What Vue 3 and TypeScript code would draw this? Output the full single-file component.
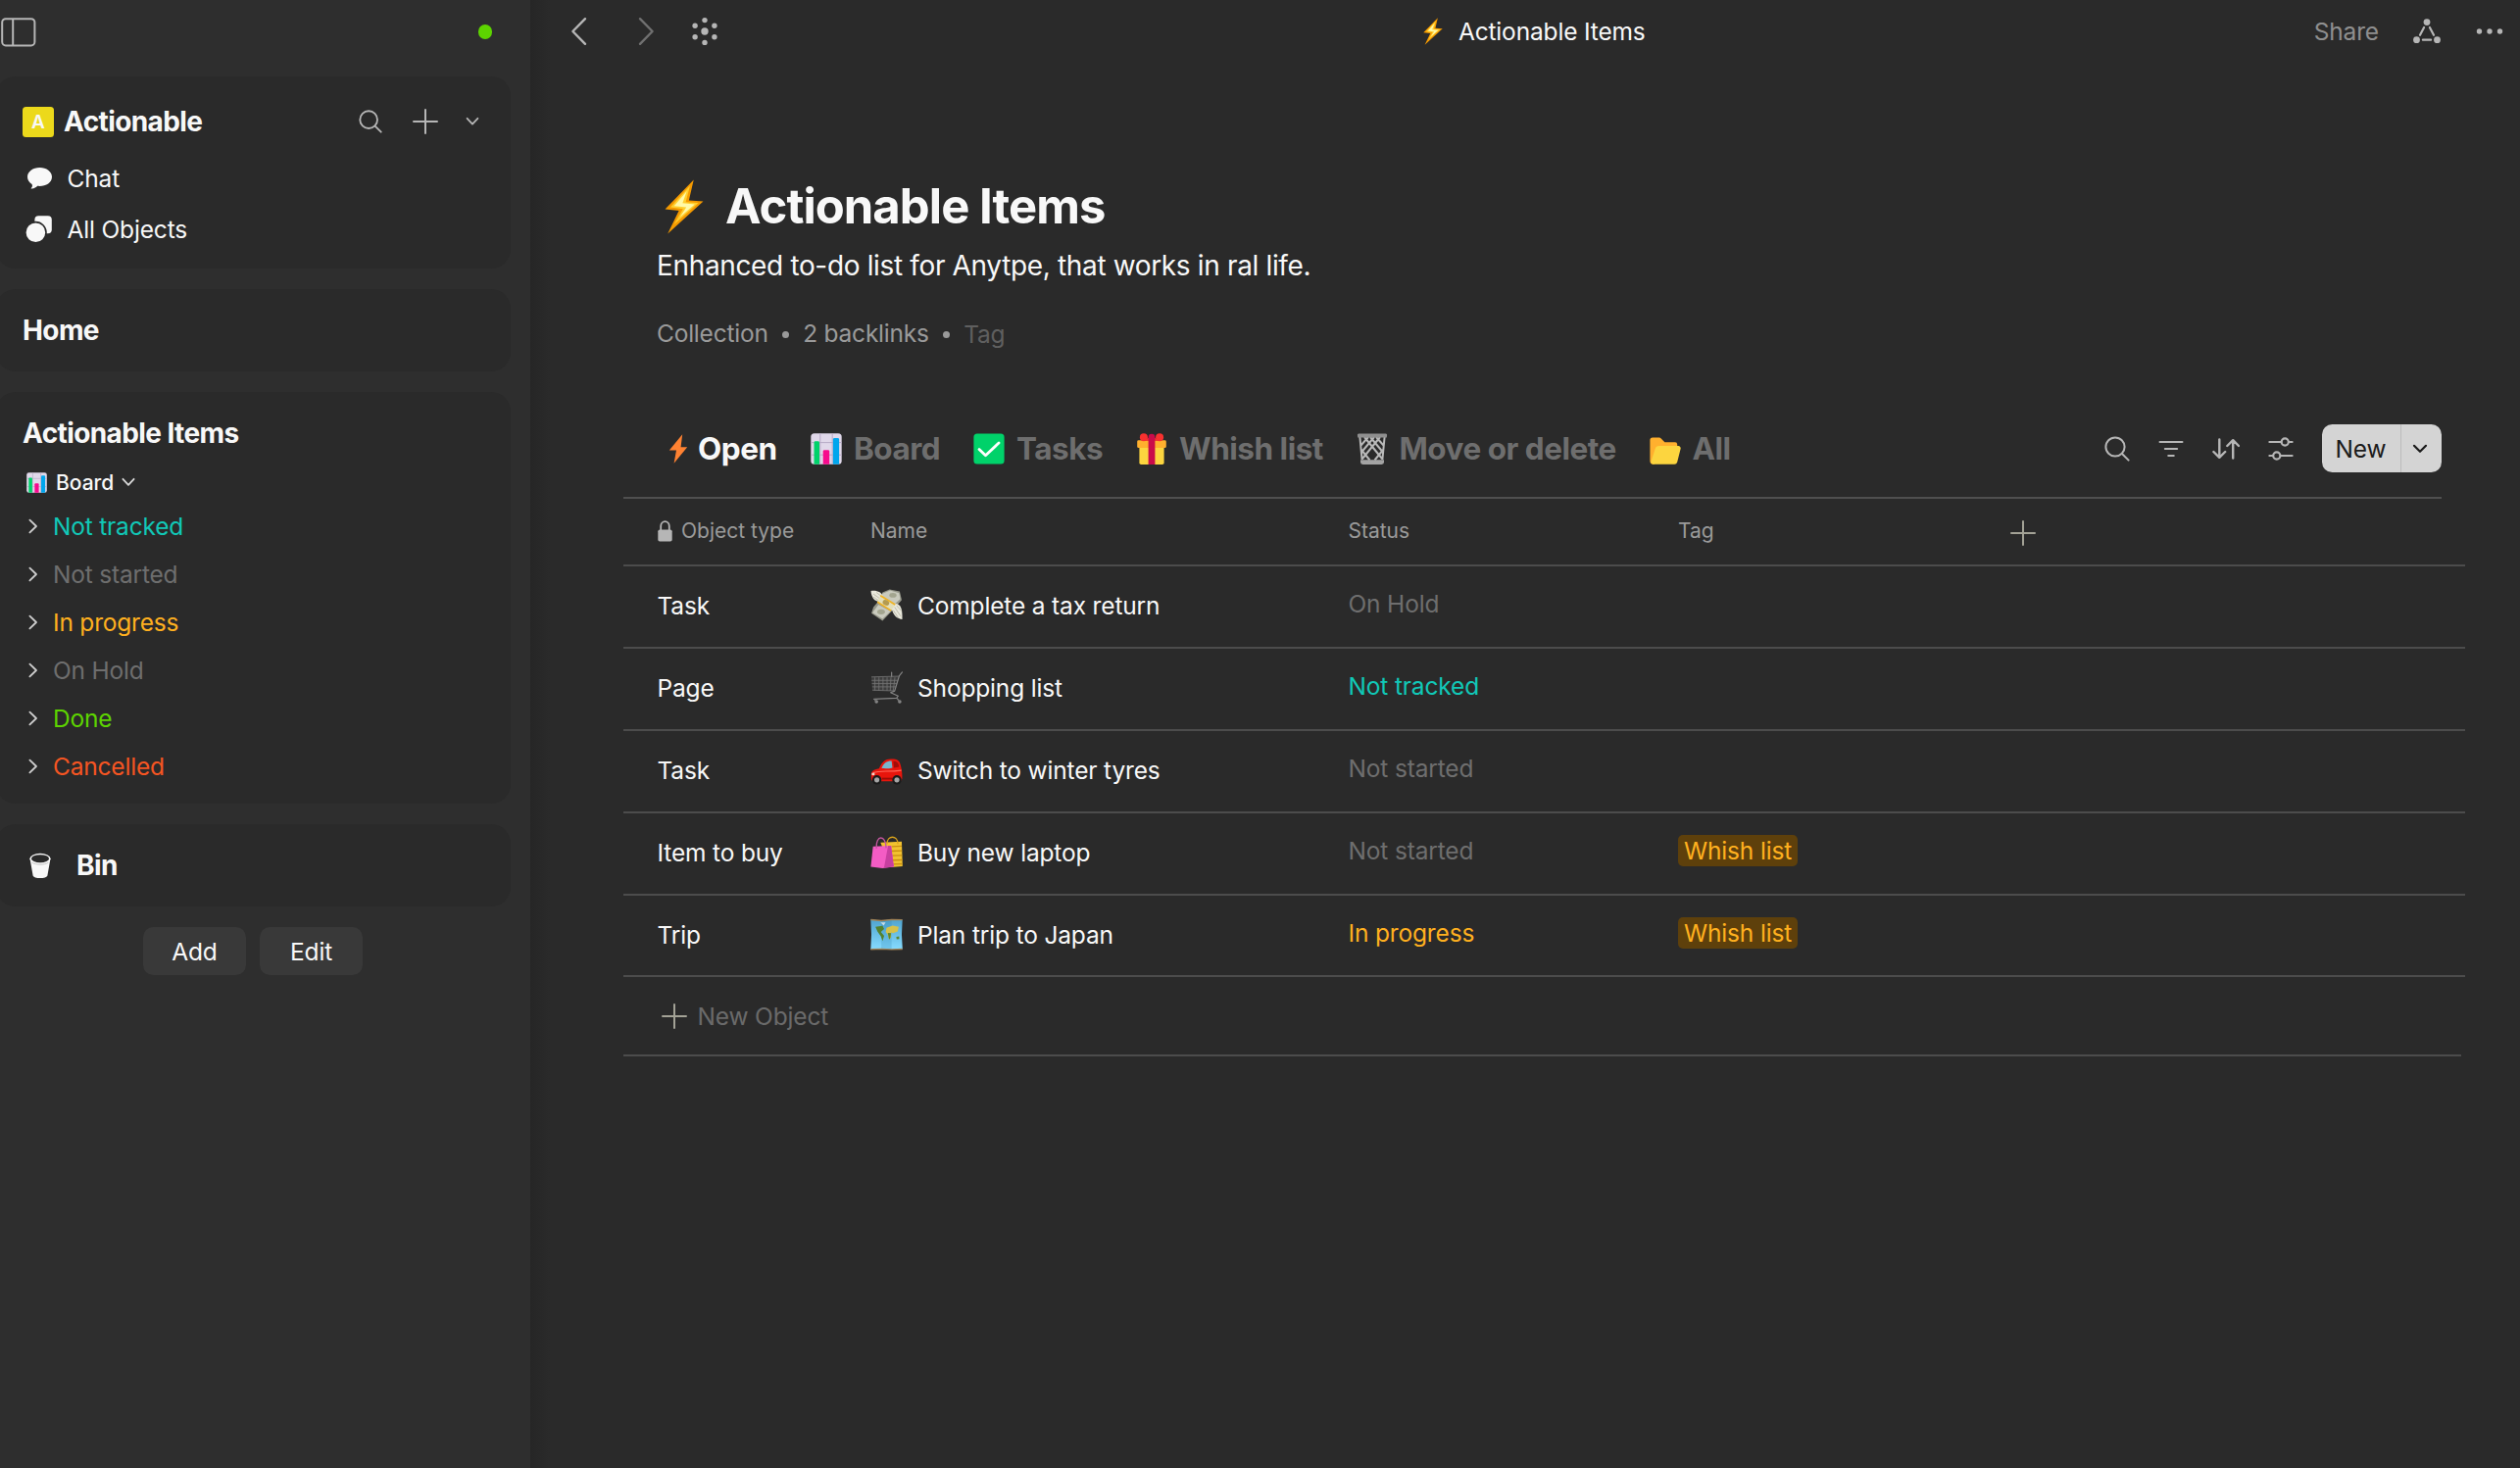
<script setup lang="ts">
interface StatusGroup {
  label: string
  tone: string
}

interface ViewTab {
  label: string
  icon: string
  active?: boolean
}

interface Item {
  type: string
  icon: string
  name: string
  status: string
  tone: string
  tag?: string
}

const groups: StatusGroup[] = [
  { label: 'Not tracked', tone: 'teal' },
  { label: 'Not started', tone: 'grey' },
  { label: 'In progress', tone: 'orange' },
  { label: 'On Hold', tone: 'grey' },
  { label: 'Done', tone: 'lime' },
  { label: 'Cancelled', tone: 'red' },
]

const tabs: ViewTab[] = [
  { label: 'Open', icon: 'flash', active: true },
  { label: 'Board', icon: 'chart' },
  { label: 'Tasks', icon: 'check' },
  { label: 'Whish list', icon: 'gift' },
  { label: 'Move or delete', icon: 'basket' },
  { label: 'All', icon: 'folder' },
]

const items: Item[] = [
  { type: 'Task', icon: 'money', name: 'Complete a tax return', status: 'On Hold', tone: 'grey' },
  { type: 'Page', icon: 'cart', name: 'Shopping list', status: 'Not tracked', tone: 'teal' },
  { type: 'Task', icon: 'car', name: 'Switch to winter tyres', status: 'Not started', tone: 'grey' },
  { type: 'Item to buy', icon: 'bags', name: 'Buy new laptop', status: 'Not started', tone: 'grey', tag: 'Whish list' },
  { type: 'Trip', icon: 'map', name: 'Plan trip to Japan', status: 'In progress', tone: 'orange', tag: 'Whish list' },
]
</script>

<template>
  <div class="app">
    <svg class="sprites" width="0" height="0" aria-hidden="true">
      <defs>
        <linearGradient id="mapFill" x1="0" y1="0" x2="0" y2="1">
          <stop offset="0" stop-color="#4fa3cf" />
          <stop offset="1" stop-color="#86dcff" />
        </linearGradient>
      </defs>
      <symbol id="bolt" viewBox="3 0 37 56" preserveAspectRatio="none">
        <path d="M30.5 0.5 L3.5 30.5 L16.5 32 L6 55.5 L39.5 22.5 L26 21.5 Z" fill="#f59a00" />
        <path d="M27 6.5 L8.5 28.6 L20.4 30.2 L12 46 L35 24 L23 23.2 Z" fill="#ffcf2e" />
        <path d="M24 12 L12 27.2 L23.5 28.6 L17.6 38.5 L31.5 25.4 L20 24.3 Z" fill="#fff9a8" />
      </symbol>
      <symbol id="flash" viewBox="0 0 32 32">
        <path d="M20.2 1.2 L6.8 17.6 H14 L11.6 30.8 L25.2 14.2 H18.6 Z" fill="#ff8232" />
      </symbol>
      <symbol id="chart" viewBox="0 0 32 32">
        <rect x="0.3" y="0.3" width="31.4" height="31.4" rx="3.5" fill="#e0d8ea" />
        <path d="M9.8 0.3V31.7 M22.2 0.3V31.7 M0.3 9.6H31.7 M0.3 22.2H31.7" stroke="#b7a9c6" stroke-width="1" />
        <path d="M3.5 31.7V9.7a1.4 1.4 0 0 1 1.4-1.4H7.6a1.4 1.4 0 0 1 1.4 1.4V31.7Z" fill="#00d26a" />
        <path d="M12.7 31.7V18.6a1.4 1.4 0 0 1 1.4-1.4H17.8a1.4 1.4 0 0 1 1.4 1.4V31.7Z" fill="#f70a8d" />
        <path d="M22.9 31.7V6.4a1.4 1.4 0 0 1 1.4-1.4H27.7a1.4 1.4 0 0 1 1.4 1.4V31.7Z" fill="#00a6ed" />
      </symbol>
      <symbol id="check" viewBox="0 0 32 32">
        <rect x="0.4" y="0.4" width="31.2" height="31.2" rx="3.6" fill="#00d26a" />
        <path d="M6 16.6 L12.5 22.8 L26 10" fill="none" stroke="#fff" stroke-width="2.8" stroke-linecap="round" stroke-linejoin="round" />
      </symbol>
      <symbol id="gift" viewBox="0 0 32 32">
        <rect x="3.4" y="10" width="25.2" height="22" rx="1.8" fill="#fcd53f" />
        <rect x="1.2" y="7.3" width="29.6" height="7.8" rx="1.4" fill="#ffb02e" />
        <circle cx="7.9" cy="4.2" r="4" fill="#f8312f" />
        <circle cx="24.1" cy="4.2" r="4" fill="#f8312f" />
        <path d="M7 7.8 L14 4.2 L16 1.6 L18 4.2 L25 7.8 Z" fill="#f8312f" />
        <path d="M12.6 32V4.2a3.4 3.4 0 0 1 6.8 0V32Z" fill="#ca0b4a" />
      </symbol>
      <symbol id="basket" viewBox="0 0 32 32">
        <path d="M3.4 4 L5.6 27 M28.6 4 L26.4 27 M8 4 L26 26 M14 4 L27 19.5 M20 4 L28 13 M24 4 L6 26 M18 4 L5 19.5 M12 4 L4 13 M4.5 16.5 L13.5 27.5 M27.5 16.5 L18.5 27.5" fill="none" stroke="#b9b9b9" stroke-width="2" />
        <path d="M2.2 0.4H29.8a1.4 1.4 0 0 1 1.3 1.6L30.8 4.6H1.2L0.9 2a1.4 1.4 0 0 1 1.3-1.6Z" fill="#8f8f8f" />
        <path d="M4 27.2H28V29.6a2.4 2.4 0 0 1-2.4 2.4H6.4A2.4 2.4 0 0 1 4 29.6Z" fill="#a3a3a3" />
      </symbol>
      <symbol id="folder" viewBox="0 0 32 32">
        <path d="M0.4 7.2a2.6 2.6 0 0 1 2.6-2.6H9.8a2.6 2.6 0 0 1 1.9 0.8L15.4 9.2H26a2.2 2.2 0 0 1 2.2 2.2V20L4 31.8A3.6 3.6 0 0 1 0.4 28.2Z" fill="#ffb02e" />
        <path d="M9.8 13H29.4a2.3 2.3 0 0 1 2.2 2.9L28.2 29.6a3 3 0 0 1-2.9 2.2H3.8a2.4 2.4 0 0 1-2.3-3L5.6 16.2A4.3 4.3 0 0 1 9.8 13Z" fill="#fcd53f" />
      </symbol>
      <symbol id="money" viewBox="0 0 32 32">
        <path d="M12 3.5 L19 0.5 L29 2.5 L31 11 L24 19 L12 31.5 L1 24 L3 18 L9 11 Z" fill="#96978a" />
        <path d="M12 4.5 L19.5 1.5 L28.5 4 L29.5 10 L24 15 L11 8 Z M8 15.5 L20 22 L12 29.5 L2 23.5 Z" fill="#c9cabd" />
        <ellipse cx="22.3" cy="6.2" rx="3.6" ry="2.4" fill="#a3a58f" />
        <ellipse cx="10.6" cy="22.6" rx="3.8" ry="2.6" fill="#a3a58f" />
        <path d="M0.5 2 C6 1 11.5 3 12.5 8 L9 12.5 C4 12.5 1 8.5 0.5 2Z" fill="#e9e8dc" />
        <path d="M21 19 L24.5 14.5 C30 15 31.8 19 31.5 30 C27 30 22 26 21 19Z" fill="#e9e8dc" />
        <path d="M3 5 L10 10 M3 8 L9 12 M6 3.5 L12 8 M24 18 L30 27 M22.5 21 L28 29 M26 16.5 L31 22" stroke="#b5b4a3" stroke-width="0.8" />
        <path d="M10 6.5 L24.5 15.5 L20.5 21.5 L7 12.8 Z" fill="#e3dfba" />
        <path d="M10 6.5 L24.5 15.5 M7 12.8 L20.5 21.5" stroke="#f0b323" stroke-width="1.6" />
        <ellipse cx="15.4" cy="13.6" rx="3.4" ry="2.6" transform="rotate(30 15.4 13.6)" fill="#b49b50" />
      </symbol>
      <symbol id="cart" viewBox="0 0 32 32">
        <path d="M1 5.5 L28 4.8 L23.5 19.5 L2 18.5 Z" fill="#3d3d3d" />
        <path d="M1 5.6 L28 4.9 M1.2 9 H27.2 M1.5 12.2 H26.2 M1.8 15.4 H25.2 M2 18.7 L24 19.4 M4.5 6V19 M8.5 6V19 M12.5 6V19 M16.5 6V19.3 M20.4 6 L19.6 19.4 M24.3 6 L22.6 19.5" stroke="#757575" stroke-width="0.8" fill="none" />
        <path d="M31.5 0.8 L28.6 4.4 L24 19.5 L20 21 L27.5 24.5 L25.8 26.6 L3.5 27.5 M21 1V5" stroke="#858585" stroke-width="1.1" fill="none" stroke-linecap="round" stroke-linejoin="round" />
        <circle cx="6" cy="30" r="1.7" fill="#8a8a8a" />
        <circle cx="29" cy="30" r="1.7" fill="#8a8a8a" />
        <path d="M4 27.5 L6 30 M26 26.5 L29 30" stroke="#777" stroke-width="1.4" />
      </symbol>
      <symbol id="car" viewBox="0 0 32 32">
        <path d="M0.8 21.5 C0.8 17 3 16 8.5 14.8 C12 7.6 14.5 5.6 20 5.4 C26.5 5.2 29 6.6 30.2 12.5 C31.4 17 31.6 21 31.4 25 Q31 27.4 28.6 27.4 H3.4 Q0.8 27.2 0.8 24.6 Z" fill="#e8150c" />
        <path d="M11 14.4 C13.4 9 15.6 7.2 21 7.2 L21.8 14 Q16 15.4 11 14.4Z" fill="#79b7cc" />
        <path d="M22.6 7.4 C26.2 7.4 27.6 8.8 28.4 13 L23.4 14Z" fill="#a30d07" />
        <path d="M3 19 C9 16.4 17 18.4 30.6 16.6" stroke="#ff6a5c" stroke-width="1.1" fill="none" />
        <path d="M11.5 24.8 H22" stroke="#9c0a05" stroke-width="1.8" />
        <circle cx="6.4" cy="26" r="4.6" fill="#1b1b1b" />
        <circle cx="6.4" cy="26" r="2.5" fill="#a5a5a5" />
        <circle cx="26.2" cy="26" r="4.6" fill="#1b1b1b" />
        <circle cx="26.2" cy="26" r="2.5" fill="#a5a5a5" />
        <ellipse cx="2.8" cy="20.3" rx="1.6" ry="1.3" fill="#f6d7c9" />
      </symbol>
      <symbol id="bags" viewBox="0 0 32 32">
        <path d="M10 6.5 L31 5.6 L31.8 30 L20 31 Z" fill="#f2c230" />
        <path d="M21 10.5 L31 10 M21 15 L31.2 14.6 M21 19.5 L31.3 19.2 M21 24 L31.5 23.8 M21 28 L31.5 27.6" stroke="#c98f12" stroke-width="1.3" />
        <path d="M16.5 8 C16.5 -1 27 -1 27.2 8" fill="none" stroke="#d8a21c" stroke-width="1.3" />
        <path d="M2.6 10.5 L20.5 9.8 L23.2 30.5 L12 32 L0.4 30.6 Z" fill="#f45cc4" />
        <path d="M17.5 9.8 L20.5 9.8 L23.2 30.5 L13.5 31.6 Z" fill="#c83fa0" />
        <path d="M6 12.5 C5 -1.5 15.5 -1.5 15.6 12" fill="none" stroke="#c2559e" stroke-width="1.3" />
      </symbol>
      <symbol id="map" viewBox="0 0 32 32">
        <path d="M0.3 1.2 L10.8 2.4 L21 1.2 L31.7 1.4 L31 16 L31.8 30.6 L21 31 L10.8 30.4 L0.3 31 L1 16 Z" fill="url(#mapFill)" />
        <path d="M10.8 2.4 L21 1.2 V31 L10.8 30.4Z" fill="#2f7fae" opacity="0.22" />
        <path d="M0.4 1.4 L10.8 2.4 L21 1.4 L31.6 1.6 M0.4 30.8 L10.8 30.4 L21 30.9 L31.6 30.6" stroke="#a08256" stroke-width="1.4" fill="none" />
        <path d="M5 8.6 L12 7.6 L13.6 10.6 L10.4 13.5 L13.6 17.5 L12 22.6 L10.4 18 L7 13 Z" fill="#54822e" />
        <path d="M16 9.5 L22 7.2 L28 8.6 L27 13 L22.4 14.8 L20.6 14 L20.4 19 L18.6 21 L17 16 L15.2 13.6Z" fill="#d5c24b" />
        <path d="M17.2 14.6 L20.4 14.8 L19.8 19.4 L18.5 21Z M25.6 18.4 L28.4 18 L28.6 20.6 L26 20.8Z" fill="#5b872f" />
        <path d="M10 4 L15 4.1 L13.2 7.2Z" fill="#c9dde6" />
      </symbol>
      <symbol id="plus" viewBox="0 0 26 26">
        <path d="M13 1V25M1 13H25" stroke="currentColor" stroke-width="2" stroke-linecap="round" />
      </symbol>
      <symbol id="search" viewBox="0 0 26 26">
        <circle cx="11" cy="11" r="9.6" fill="none" stroke="currentColor" stroke-width="2" />
        <path d="M18 18L24.6 24.6" stroke="currentColor" stroke-width="2" stroke-linecap="round" />
      </symbol>
    </svg>

    <aside class="sidebar">
      <header class="side-top">
        <svg class="toggle" width="36" height="30" viewBox="0 0 36 30" fill="none" stroke="#b6b6b6" stroke-width="2">
          <rect x="1.2" y="1.2" width="33.2" height="27.2" rx="3.6" />
          <path d="M12.2 1.2V28.4" />
        </svg>
        <span class="sync" />
      </header>

      <section class="panel space">
        <div class="space-head">
          <span class="space-icon">A</span>
          <span class="strong">Actionable</span>
          <div class="space-actions">
            <svg class="ico" width="24" height="24"><use href="#search" /></svg>
            <svg class="ico" width="26" height="26"><use href="#plus" /></svg>
            <svg width="14" height="10" viewBox="0 0 14 10" fill="none" stroke="#b6b6b6" stroke-width="1.8" stroke-linecap="round" stroke-linejoin="round"><path d="M1.6 1.8L7 7.6L12.4 1.8" /></svg>
          </div>
        </div>
        <div class="link chat">
          <svg width="27" height="24" viewBox="0 0 27 24"><path d="M13.5 1C6.6 1 1 5.2 1 10.5C1 13.6 2.8 16.2 5.6 18C6.4 19.6 5.8 21 4.7 21.9C4.5 22.4 5 22.7 5.6 22.6C8 22.3 10 21.2 11.2 19.8C18.8 20.6 26 17 26 10.5C26 5.2 20.4 1 13.5 1Z" fill="#f8f8f8" /></svg>
          <span>Chat</span>
        </div>
        <div class="link objects">
          <svg width="28" height="28" viewBox="0 0 28 28"><rect x="9.4" y="0.2" width="17.4" height="18" rx="4" fill="#f8f8f8" /><circle cx="10.4" cy="17.2" r="10.6" fill="#f8f8f8" stroke="#2a2a2a" stroke-width="1.6" /></svg>
          <span>All Objects</span>
        </div>
      </section>

      <section class="panel home"><span class="strong">Home</span></section>

      <section class="panel widget">
        <div class="strong widget-title">Actionable Items</div>
        <div class="view">
          <svg width="21" height="21"><use href="#chart" /></svg>
          <span>Board</span>
          <svg class="view-arrow" width="14" height="10" viewBox="0 0 14 10" fill="none" stroke="#d8d8d8" stroke-width="1.8" stroke-linecap="round" stroke-linejoin="round"><path d="M1.4 1.8L7 7.8L12.6 1.8" /></svg>
        </div>
        <div v-for="group in groups" :key="group.label" class="group">
          <svg width="10" height="16" viewBox="0 0 10 16" fill="none" stroke="#cfcfcf" stroke-width="1.8" stroke-linecap="round" stroke-linejoin="round"><path d="M1.4 1.6L8 8L1.4 14.4" /></svg>
          <span :class="group.tone">{{ group.label }}</span>
        </div>
      </section>

      <section class="panel bin">
        <svg width="22" height="27" viewBox="0 0 22 27"><path d="M0.6 6.5L3.6 23.4C4.2 26.8 17.8 26.8 18.4 23.4L21.4 6.5Z" fill="#f8f8f8" /><ellipse cx="11" cy="6.2" rx="10.6" ry="5.4" fill="#f8f8f8" /><ellipse cx="11" cy="6.2" rx="9" ry="4" fill="#2a2a2a" /><path d="M2.6 10.2C7 12.8 15 12.8 19.4 10.2" fill="none" stroke="#bdbdbd" stroke-width="0.9" /></svg>
        <span class="strong">Bin</span>
      </section>

      <footer class="side-buttons">
        <button type="button">Add</button>
        <button type="button">Edit</button>
      </footer>
    </aside>

    <main class="main">
      <header class="topbar">
        <nav class="nav">
          <svg width="18" height="30" viewBox="0 0 18 30" fill="none" stroke="#b6b6b6" stroke-width="2.4" stroke-linecap="round" stroke-linejoin="round"><path d="M15 2.2L2.4 15L15 27.8" /></svg>
          <svg width="18" height="30" viewBox="0 0 18 30" fill="none" stroke="#707070" stroke-width="2.4" stroke-linecap="round" stroke-linejoin="round"><path d="M3 2.2L15.6 15L3 27.8" /></svg>
          <svg width="28" height="30" viewBox="0 0 28 30" fill="#b6b6b6">
            <circle cx="14" cy="15" r="3.7" />
            <circle cx="14" cy="3.6" r="2.7" /><circle cx="14" cy="26.4" r="2.7" />
            <circle cx="4.1" cy="9.3" r="2.7" /><circle cx="23.9" cy="9.3" r="2.7" />
            <circle cx="4.1" cy="20.7" r="2.7" /><circle cx="23.9" cy="20.7" r="2.7" />
          </svg>
        </nav>
        <div class="crumb">
          <svg width="20" height="28"><use href="#bolt" /></svg>
          <span>Actionable Items</span>
        </div>
        <div class="top-actions">
          <span>Share</span>
          <svg width="30" height="28" viewBox="0 0 30 28">
            <path d="M12.1 10L8 17.8M17.9 10L22 17.8M10.9 22.7H19.1" stroke="#b6b6b6" stroke-width="2.2" stroke-linecap="round" />
            <g fill="#b6b6b6"><circle cx="15" cy="4.6" r="3.4" /><circle cx="4.5" cy="22.7" r="3.4" /><circle cx="25.5" cy="22.7" r="3.4" /></g>
          </svg>
          <svg width="28" height="8" viewBox="0 0 28 8" fill="#b6b6b6"><circle cx="3.5" cy="4" r="2.7" /><circle cx="14" cy="4" r="2.7" /><circle cx="24.5" cy="4" r="2.7" /></svg>
        </div>
      </header>

      <div class="content">
        <div class="title">
          <svg width="40" height="56"><use href="#bolt" /></svg>
          <h1>Actionable Items</h1>
        </div>
        <p class="description">Enhanced to-do list for Anytpe, that works in ral life.</p>
        <div class="meta">
          <span>Collection</span><i class="dot" /><span>2 backlinks</span><i class="dot" /><span class="empty">Tag</span>
        </div>

        <div class="controls">
          <div class="tabs">
            <div v-for="tab in tabs" :key="tab.label" class="tab" :class="[tab.icon, { active: tab.active }]">
              <svg width="32" height="32"><use :href="'#' + tab.icon" /></svg>
              <span>{{ tab.label }}</span>
            </div>
          </div>
          <div class="tools">
            <svg class="ico" width="26" height="26"><use href="#search" /></svg>
            <svg width="26" height="20" viewBox="0 0 26 20" stroke="#b6b6b6" stroke-width="2.2" stroke-linecap="round"><path d="M1.6 3H24.4M6.9 10H19.1M10.3 17H15.7" /></svg>
            <svg width="28" height="24" viewBox="0 0 28 24" fill="none" stroke="#b6b6b6" stroke-width="2.4" stroke-linecap="round" stroke-linejoin="round"><path d="M7.3 2.4V20.6M1.4 15L7.3 20.8L13.2 15M21.2 21.6V3.4M15.3 9L21.2 3.2L27 9" /></svg>
            <svg width="26" height="24" viewBox="0 0 26 24" fill="none" stroke="#b6b6b6" stroke-width="2.2" stroke-linecap="round"><path d="M1.4 5H13.4M21 5H24.6M1.4 19H5M12.6 19H24.6" /><circle cx="17.2" cy="5" r="3.6" /><circle cx="8.8" cy="19" r="3.6" /></svg>
            <div class="new">
              <span class="new-label">New</span>
              <span class="new-arrow"><svg width="16" height="10" viewBox="0 0 16 10" fill="none" stroke="#1b1b1b" stroke-width="2.2" stroke-linecap="round" stroke-linejoin="round"><path d="M2 1.8L8 7.8L14 1.8" /></svg></span>
            </div>
          </div>
        </div>

        <div class="table">
          <div class="row head">
            <div class="cell type">
              <svg width="15" height="22" viewBox="0 0 15 22"><path d="M3.2 10V6a4.3 4.8 0 0 1 8.6 0V10" fill="none" stroke="#b6b6b6" stroke-width="1.8" /><rect x="0.3" y="9.4" width="14.4" height="12.2" rx="1.8" fill="#b6b6b6" /></svg>
              <span>Object type</span>
            </div>
            <div class="cell">Name</div>
            <div class="cell">Status</div>
            <div class="cell">Tag</div>
            <div class="cell add"><svg width="26" height="26"><use href="#plus" /></svg></div>
          </div>
          <div v-for="item in items" :key="item.name" class="row">
            <div class="cell type">{{ item.type }}</div>
            <div class="cell name">
              <svg width="33" height="33"><use :href="'#' + item.icon" /></svg>
              <span>{{ item.name }}</span>
            </div>
            <div class="cell state" :class="item.tone">{{ item.status }}</div>
            <div class="cell tags"><span v-if="item.tag" class="tag">{{ item.tag }}</span></div>
          </div>
          <div class="new-object">
            <svg width="26" height="26"><use href="#plus" /></svg>
            <span>New Object</span>
          </div>
        </div>
      </div>
    </main>
  </div>
</template>

<style>
body {
  background: #2a2a2a;
}
</style>

<style scoped>
.app {
  display: flex;
  width: 2571px;
  height: 1498px;
  overflow: hidden;
  background: #2a2a2a;
  color: #f8f8f8;
  font-family: Inter, "Liberation Sans", sans-serif;
  font-size: 24.5px;
  letter-spacing: -0.16px;
  white-space: nowrap;
}

.app svg {
  display: block;
  flex: none;
}

.sprites {
  position: absolute;
}

.ico {
  color: #b6b6b6;
}

.teal { color: #11c8b7; }
.grey { color: #6e6e6e; }
.orange { color: #ffb01f; }
.lime { color: #5dd400; }
.red { color: #f55522; }

.strong {
  font-size: 28px;
  font-weight: 700;
  letter-spacing: -0.6px;
}

.sidebar {
  flex: none;
  display: flex;
  flex-direction: column;
  width: 541px;
  background: #2e2e2e;
}

.side-top {
  display: flex;
  align-items: center;
  justify-content: space-between;
  height: 65px;
  padding: 0 39px 0 1px;
  margin-bottom: 13px;
}

.sync {
  width: 14.5px;
  height: 14.5px;
  border-radius: 50%;
  background: #5dd400;
}

.panel {
  box-sizing: border-box;
  width: 525px;
  margin: 0 0 21px -4px;
  padding-left: 27px;
  border-radius: 20px;
  background: #2a2a2a;
}

.space {
  height: 196px;
  padding-top: 22px;
}

.space-head {
  display: flex;
  align-items: center;
  height: 48px;
}

.space-icon {
  width: 32px;
  height: 31px;
  margin-right: 10px;
  border-radius: 3.5px;
  background: #ecd91b;
  font-size: 19px;
  font-weight: 600;
  line-height: 31px;
  text-align: center;
  letter-spacing: 0;
}

.space-actions {
  display: flex;
  align-items: center;
  margin-left: auto;
  padding-right: 32px;
}

.space-actions svg:nth-child(1) { margin-right: 31px; }
.space-actions svg:nth-child(2) { margin-right: 28px; }

.link {
  display: flex;
  align-items: center;
  height: 53px;
}

.chat {
  margin-top: 8px;
  height: 51px;
  padding-left: 4px;
}

.chat svg { margin-right: 14.5px; }
.objects { padding-left: 3px; }
.objects svg { margin-right: 14.5px; }

.home {
  display: flex;
  align-items: center;
  height: 84px;
}

.widget {
  height: 420px;
  padding-top: 21px;
}

.widget-title {
  height: 42px;
  line-height: 43px;
}

.view {
  display: flex;
  align-items: center;
  height: 48px;
  margin: 5px 0 -4px 4px;
  font-size: 21px;
  font-weight: 500;
  letter-spacing: 0;
}

.view span { margin: 0 8px 0 9px; }

.group {
  display: flex;
  align-items: center;
  height: 49px;
  padding-left: 6px;
}

.group span {
  margin-left: 15px;
  letter-spacing: -0.2px;
}

.bin {
  display: flex;
  align-items: center;
  height: 84px;
  padding-left: 34px;
}

.bin .strong { margin-left: 26px; }

.side-buttons {
  display: flex;
  gap: 14px;
  padding-left: 146px;
}

.side-buttons button {
  width: 105px;
  height: 49px;
  padding: 0;
  border: 0;
  border-radius: 10.5px;
  background: #393939;
  color: #f8f8f8;
  font: inherit;
  letter-spacing: inherit;
  line-height: 50px;
}

.main {
  flex: 1;
  min-width: 0;
  background: linear-gradient(to right, #262626 0, #282828 10px, #2a2a2a 20px);
}

.topbar {
  display: grid;
  grid-template-columns: 1fr auto 1fr;
  align-items: center;
  height: 64px;
}

.nav {
  display: flex;
  align-items: center;
  padding-left: 41px;
}

.nav svg:nth-child(1) { margin-right: 50px; }
.nav svg:nth-child(2) { margin-right: 37px; }

.crumb {
  display: flex;
  align-items: center;
  gap: 15.5px;
  padding-left: 19px;
}

.top-actions {
  display: flex;
  align-items: center;
  justify-content: flex-end;
  padding-right: 17px;
  color: #8f8f8f;
}

.top-actions span { margin-right: 34px; }
.top-actions svg:nth-child(2) { margin-right: 35px; }

.content {
  padding: 119px 56px 0 95px;
}

.title {
  display: flex;
  align-items: center;
  height: 56px;
  padding-left: 42px;
}

.title h1 {
  margin: 0 0 0 22px;
  font-size: 49px;
  font-weight: 700;
  letter-spacing: -0.95px;
  line-height: 56px;
}

.description {
  margin: 11px 0 27px 34px;
  font-size: 28px;
  letter-spacing: -0.35px;
  line-height: 42px;
}

.meta {
  display: flex;
  align-items: center;
  height: 42px;
  margin: 0 0 72px 34px;
  color: #9a9a9a;
  letter-spacing: -0.22px;
}

.dot {
  width: 7px;
  height: 7px;
  margin: 2px 14px 0 14.5px;
  border-radius: 50%;
  background: #9a9a9a;
}

.meta .empty {
  padding-top: 2px;
  color: #5f5f5f;
}

.controls {
  display: flex;
  justify-content: space-between;
  height: 49px;
  margin-right: 24px;
  padding-bottom: 25px;
  border-bottom: 2px solid #4f4f4f;
}

.tabs {
  display: grid;
  grid-template-columns: 151px 166px 166px 224.5px 299px auto;
  align-items: center;
  padding-left: 40px;
}

.tab {
  display: flex;
  align-items: center;
  gap: 12px;
  color: #6e6e6e;
  font-size: 31.5px;
  font-weight: 700;
  letter-spacing: -0.49px;
}

.tab.flash { gap: 4px; }
.tab.active { color: #f8f8f8; }

.tools {
  display: flex;
  align-items: center;
}

.tools > svg { margin-right: 29px; }

.new {
  display: flex;
  align-items: center;
  width: 122px;
  height: 49px;
  border-radius: 10.5px;
  background: #d4d4d4;
  color: #1b1b1b;
}

.new-label {
  box-sizing: border-box;
  width: 81px;
  height: 49px;
  padding-left: 13.5px;
  border-right: 1px solid #bcbcbc;
  line-height: 51px;
}

.new-arrow {
  display: flex;
  justify-content: center;
  width: 38px;
}

.row {
  display: grid;
  grid-template-columns: 252px 487.5px 336.5px 339px auto;
  height: 82px;
  border-bottom: 2px solid #4c4c4c;
}

.row:nth-child(6) {
  height: 81px;
}

.cell {
  display: flex;
  align-items: center;
  height: 79px;
}

.cell.type { padding-left: 34.5px; }

.name svg { margin-right: 15px; }

.cell.state,
.cell.tags {
  height: 75px;
}

.head {
  height: 67px;
  color: #9a9a9a;
  font-size: 21px;
  letter-spacing: 0;
}

.head .cell { height: 65px; }
.head .type svg { margin-right: 9.5px; }

.head .add {
  height: 69px;
  color: #a3a296;
}

.tag {
  height: 32px;
  padding: 0 6px;
  border-radius: 5px;
  background: #5e400b;
  color: #ffb01f;
  line-height: 32px;
}

.new-object {
  display: flex;
  align-items: center;
  height: 79px;
  margin-right: 4px;
  padding-left: 38.5px;
  border-bottom: 2px solid #4c4c4c;
  color: #6a6a6a;
}

.new-object svg {
  margin-right: 11px;
  color: #a3a296;
}
</style>
